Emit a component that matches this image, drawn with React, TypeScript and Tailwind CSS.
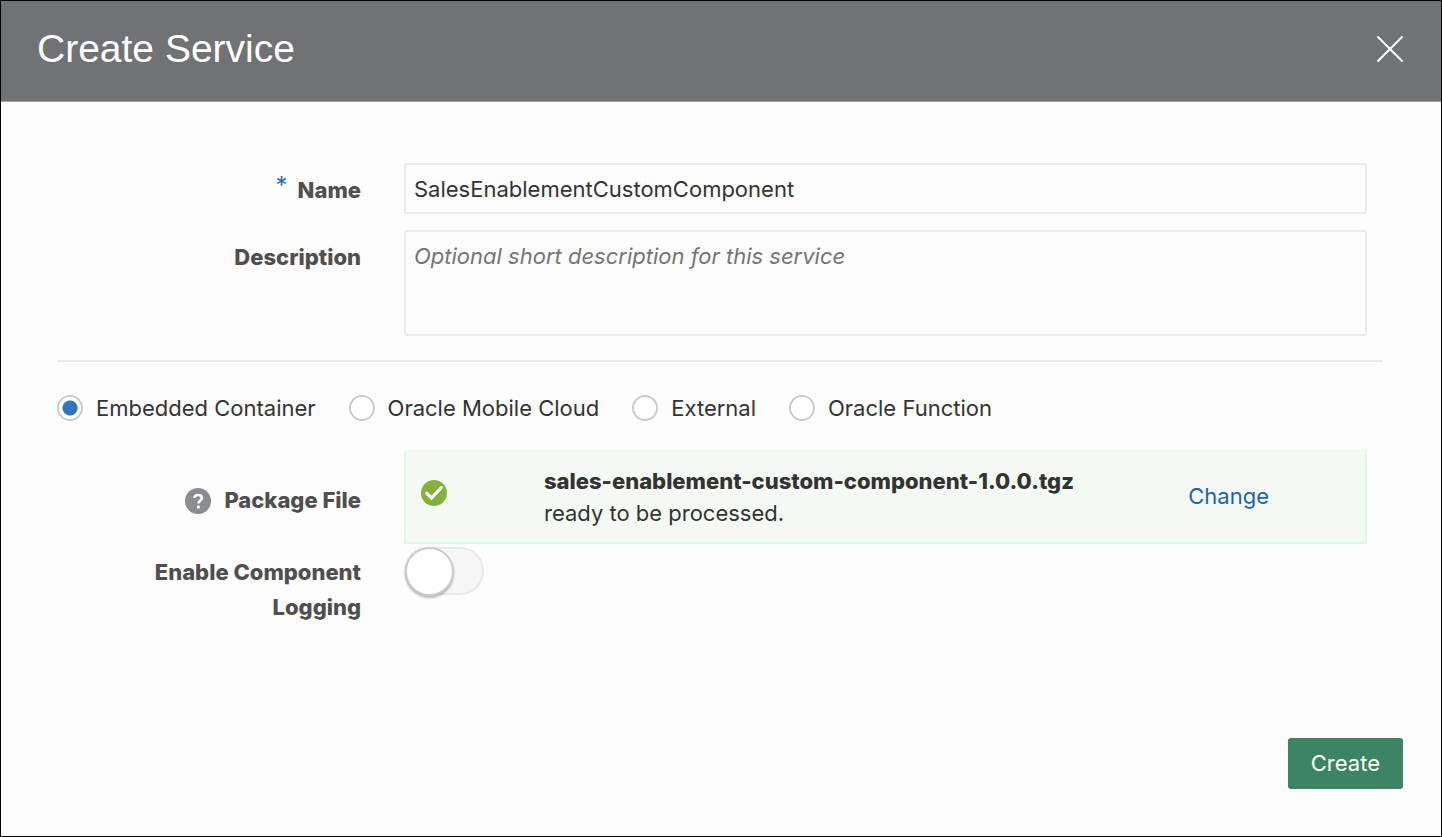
import { useState } from "react";
import type { ReactNode } from "react";

const serviceTypes = [
  "Embedded Container",
  "Oracle Mobile Cloud",
  "External",
  "Oracle Function",
];

const labelClass = "text-right text-[22px] leading-[35px] font-extrabold text-[#4f4f4f]";
const fieldClass =
  "block w-full rounded-[3px] border-2 border-[#e9ebeb] bg-[#fcfcfc] px-2 text-[22px] text-[#333333] outline-none";

function Row({ label, children }: { label: ReactNode; children: ReactNode }) {
  return (
    <div className="grid grid-cols-[304px_minmax(0,1fr)] gap-x-[43px] pr-4">
      {label}
      <div>{children}</div>
    </div>
  );
}

function CloseIcon() {
  return (
    <svg viewBox="0 0 28 28" className="size-7" fill="none" stroke="currentColor" strokeWidth="2" strokeLinecap="round" aria-hidden="true">
      <path d="M2 2 26 26M26 2 2 26" />
    </svg>
  );
}

function HelpIcon() {
  return (
    <svg viewBox="0 0 26 26" className="size-[26px]" fill="none" aria-hidden="true">
      <circle cx="13" cy="13" r="13" fill="#8b8c8e" />
      <path d="M9.3 9.8C9.5 7.9 11 6.9 13.1 6.9c2.200 0 3.800 1.200 3.800 3.100 0 2.700-3.500 2.900-3.500 5.600" stroke="#fcfcfc" strokeWidth="2.500" />
      <rect x="12" y="17.600" width="2.800" height="2.900" rx="0.600" fill="#fcfcfc" />
    </svg>
  );
}

function SuccessIcon() {
  return (
    <svg viewBox="0 0 26 26" className="size-[26px]" fill="none" aria-hidden="true">
      <circle cx="13" cy="13" r="13" fill="#85b13b" />
      <path d="M5.600 13.200 10.500 18 20.300 7.700" stroke="#ffffff" strokeWidth="3.200" strokeLinecap="round" />
    </svg>
  );
}

export default function App() {
  const [name, setName] = useState("SalesEnablementCustomComponent");
  const [description, setDescription] = useState("");
  const [serviceType, setServiceType] = useState(serviceTypes[0]);
  const [logging, setLogging] = useState(false);

  return (
    <form
      className="flex min-h-screen flex-col border border-black bg-[#fcfcfc] font-['Inter','Liberation_Sans',sans-serif] text-[22px] text-[#333333]"
      onSubmit={(event) => event.preventDefault()}
    >
      <header className="flex h-[101px] items-start justify-between border-b border-[#a0a0a0] bg-[#717274] pt-6 pr-[37px] pl-9 text-white">
        <h1 className="font-['Liberation_Sans',Arial,sans-serif] text-[39px] leading-[48px]">Create Service</h1>
        <button type="button" aria-label="Close" className="mt-2.5">
          <CloseIcon />
        </button>
      </header>

      <main className="flex-1 pt-[61px] pr-[58px] pl-14">
        <div className="flex flex-col gap-4">
          <Row
            label={
              <label htmlFor="name" className={`${labelClass} pt-2.5`}>
                <span className="mr-2.5 align-[4px] text-[24px] leading-none font-normal text-[#2a6cab]">*</span>
                Name
              </label>
            }
          >
            <input
              id="name"
              type="text"
              required
              value={name}
              onChange={(event) => setName(event.target.value)}
              className={`${fieldClass} h-[51px]`}
            />
          </Row>
          <Row
            label={
              <label htmlFor="description" className={`${labelClass} pt-2.5`}>
                Description
              </label>
            }
          >
            <textarea
              id="description"
              value={description}
              onChange={(event) => setDescription(event.target.value)}
              placeholder="Optional short description for this service"
              className={`${fieldClass} h-[106px] resize-none pt-2 leading-[32px] placeholder:text-[#757575] placeholder:italic`}
            />
          </Row>
        </div>

        <hr className="mt-6 border-t-2 border-[#e9e9e9]" />

        <div role="radiogroup" aria-label="Service type" className="mt-8 flex flex-wrap gap-x-[33px] gap-y-3">
          {serviceTypes.map((type) => (
            <label key={type} className="flex items-center gap-[13px] leading-[28px]">
              <input
                type="radio"
                name="service-type"
                checked={serviceType === type}
                onChange={() => setServiceType(type)}
                className="size-[26px] shrink-0 appearance-none rounded-full border-2 border-[#cccccc] bg-white checked:bg-[radial-gradient(circle,#2f78bf_7px,white_8px)]"
              />
              {type}
            </label>
          ))}
        </div>

        <div className="mt-7 flex flex-col gap-[3px]">
          <Row
            label={
              <div className="flex items-center justify-end gap-[13px] pt-[7px]">
                <button type="button" aria-label="Help for package file">
                  <HelpIcon />
                </button>
                <span className={labelClass}>Package File</span>
              </div>
            }
          >
            <div className="flex h-[94px] items-start border-x-2 border-b-2 border-[#e1f7e7] bg-[#f3faf4] pt-[15px] pr-24 pl-[15px]">
              <span className="pt-[15px]">
                <SuccessIcon />
              </span>
              <p className="ml-[97px] flex-1 leading-[32px]">
                <strong className="block font-extrabold">sales-enablement-custom-component-1.0.0.tgz</strong>
                ready to be processed.
              </p>
              <button type="button" className="self-center pb-3.5 text-[#24639f]">
                Change
              </button>
            </div>
          </Row>
          <Row
            label={
              <label htmlFor="logging" className={`${labelClass} pt-2 pl-20`}>
                Enable Component Logging
              </label>
            }
          >
            <input
              id="logging"
              type="checkbox"
              role="switch"
              checked={logging}
              onChange={(event) => setLogging(event.target.checked)}
              className="flex h-12 w-20 appearance-none rounded-full border-2 border-[#e9e9e9] bg-[#f6f6f6] before:-mt-0.5 before:-ml-px before:size-[49px] before:rounded-full before:border-2 before:border-[#cccccc] before:bg-white before:shadow-[0_2px_2px_rgba(0,0,0,0.25)] checked:bg-[#85b13b] checked:before:ml-auto"
            />
          </Row>
        </div>
      </main>

      <footer className="flex justify-end pr-[38px] pb-[47px]">
        <button type="submit" className="h-[51px] rounded-[3px] bg-[#3b8562] px-[23px] text-white">
          Create
        </button>
      </footer>
    </form>
  );
}
